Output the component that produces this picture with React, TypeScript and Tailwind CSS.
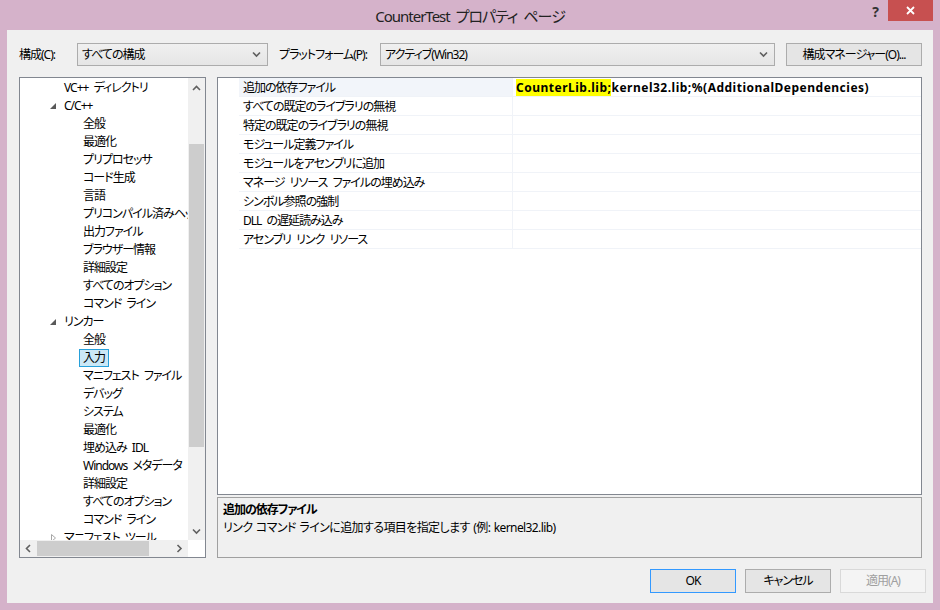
import React from 'react';

const FONT =
  "font-['Noto_Sans','Noto_Sans_CJK_JP',sans-serif] [font-feature-settings:'palt'] tracking-[-1px] [word-spacing:3px]";

type TreeItem = { label: string; level: 1 | 2; state?: 'open' | 'closed'; selected?: boolean };

const treeItems: TreeItem[] = [
  { label: 'VC++ ディレクトリ', level: 1 },
  { label: 'C/C++', level: 1, state: 'open' },
  { label: '全般', level: 2 },
  { label: '最適化', level: 2 },
  { label: 'プリプロセッサ', level: 2 },
  { label: 'コード生成', level: 2 },
  { label: '言語', level: 2 },
  { label: 'プリコンパイル済みヘッダー', level: 2 },
  { label: '出力ファイル', level: 2 },
  { label: 'ブラウザー情報', level: 2 },
  { label: '詳細設定', level: 2 },
  { label: 'すべてのオプション', level: 2 },
  { label: 'コマンド ライン', level: 2 },
  { label: 'リンカー', level: 1, state: 'open' },
  { label: '全般', level: 2 },
  { label: '入力', level: 2, selected: true },
  { label: 'マニフェスト ファイル', level: 2 },
  { label: 'デバッグ', level: 2 },
  { label: 'システム', level: 2 },
  { label: '最適化', level: 2 },
  { label: '埋め込み IDL', level: 2 },
  { label: 'Windows メタデータ', level: 2 },
  { label: '詳細設定', level: 2 },
  { label: 'すべてのオプション', level: 2 },
  { label: 'コマンド ライン', level: 2 },
  { label: 'マニフェスト ツール', level: 1, state: 'closed' },
];

const properties = [
  '追加の依存ファイル',
  'すべての既定のライブラリの無視',
  '特定の既定のライブラリの無視',
  'モジュール定義ファイル',
  'モジュールをアセンブリに追加',
  'マネージ リソース ファイルの埋め込み',
  'シンボル参照の強制',
  'DLL の遅延読み込み',
  'アセンブリ リンク リソース',
];

function Chevron({ dir }: { dir: 'up' | 'down' | 'left' | 'right' }) {
  const d = {
    up: 'M1 5 L4.5 1.5 L8 5',
    down: 'M1 1.5 L4.5 5 L8 1.5',
    left: 'M5 1 L1.5 4.5 L5 8',
    right: 'M1.5 1 L5 4.5 L1.5 8',
  }[dir];
  const vertical = dir === 'up' || dir === 'down';
  return (
    <svg width={vertical ? 9 : 7} height={vertical ? 7 : 9} viewBox={vertical ? '0 0 9 7' : '0 0 7 9'}>
      <path d={d} fill="none" stroke="#606060" strokeWidth="1.6" />
    </svg>
  );
}

function ComboBox({ value, width }: { value: string; width: string }) {
  return (
    <div
      className={`${width} flex h-[23px] items-center justify-between border border-[#acacac] bg-gradient-to-b from-[#f0f0f0] to-[#e5e5e5] pl-[4px] pr-[6px] text-[12px] text-black`}
    >
      <span>{value}</span>
      <Chevron dir="down" />
    </div>
  );
}

function TreeRow({ item }: { item: TreeItem }) {
  return (
    <div className="flex h-[18px] items-center whitespace-nowrap">
      {item.level === 1 ? (
        <>
          <span className="flex w-[44px] justify-end pr-[8px]">
            {item.state === 'open' && (
              <svg width="6" height="6" viewBox="0 0 6 6">
                <polygon points="6,0 6,6 0,6" fill="#595959" />
              </svg>
            )}
            {item.state === 'closed' && (
              <svg width="5" height="8" viewBox="0 0 5 8">
                <polygon points="0.5,0.5 4.5,4 0.5,7.5" fill="none" stroke="#a6a6a6" strokeWidth="1" />
              </svg>
            )}
          </span>
          <span>{item.label}</span>
        </>
      ) : (
        <span
          className={
            item.selected
              ? 'ml-[59px] flex h-[18px] items-center border border-[#26a0da] bg-[#cbe8f6] px-[3px]'
              : 'ml-[63px]'
          }
        >
          {item.label}
        </span>
      )}
    </div>
  );
}

function TreePanel() {
  return (
    <div className="flex h-[481px] w-[187px] flex-col border border-[#828790] bg-white text-[12px] text-black">
      <div className="flex min-h-0 flex-1">
        <div className="min-w-0 flex-1 overflow-hidden pt-[1px]">
          {treeItems.map((item, i) => (
            <TreeRow key={i} item={item} />
          ))}
        </div>
        {/* vertical scrollbar */}
        <div className="flex w-[17px] flex-col bg-[#f0f0f0]">
          <div className="flex h-[17px] items-center justify-center pt-[4px]">
            <Chevron dir="up" />
          </div>
          <div className="h-[49px]" />
          <div className="mx-[1px] h-[303px] bg-[#cdcdcd]" />
          <div className="flex-1" />
          <div className="flex h-[17px] items-center justify-center">
            <Chevron dir="down" />
          </div>
        </div>
      </div>
      {/* horizontal scrollbar */}
      <div className="flex h-[17px]">
        <div className="flex flex-1 items-center bg-[#f0f0f0]">
          <div className="flex w-[17px] justify-center">
            <Chevron dir="left" />
          </div>
          <div className="h-[15px] w-[112px] bg-[#cdcdcd]" />
          <div className="flex-1" />
          <div className="flex w-[17px] justify-center">
            <Chevron dir="right" />
          </div>
        </div>
        <div className="w-[17px] bg-white" />
      </div>
    </div>
  );
}

function PropertyGrid() {
  return (
    <div className="h-[418px] border border-[#828790] bg-white text-[12px] text-black">
      {properties.map((name, i) => (
        <div key={name} className="flex h-[19px]">
          <div className="w-[21px]" />
          <div
            className={`flex w-[274px] items-center border-b border-r border-[#f0f3f8] pl-[4px] pt-[2px] ${
              i === 0 ? 'bg-[#f2f5fa]' : ''
            }`}
          >
            {name}
          </div>
          <div className="flex flex-1 items-center border-b border-[#f0f3f8] pl-[3px] pt-[2px]">
            {i === 0 && (
              <span className="font-bold tracking-[0.5px] [word-spacing:0px]">
                <span className="bg-[#ffff00]">CounterLib.lib;</span>
                kernel32.lib;%(AdditionalDependencies)
              </span>
            )}
          </div>
        </div>
      ))}
    </div>
  );
}

function Button({ label, primary, disabled }: { label: string; primary?: boolean; disabled?: boolean }) {
  const tone = disabled
    ? 'border-[#d9d9d9] bg-[#f4f4f4] text-[#a0a0a0]'
    : primary
      ? 'border-[#3399ff] bg-[#e5e5e5] text-black'
      : 'border-[#acacac] bg-[#e5e5e5] text-black';
  return (
    <div className={`flex h-[24px] w-[86px] items-center justify-center border text-[12px] ${tone}`}>
      {label}
    </div>
  );
}

export default function App() {
  return (
    <div className={`flex h-[610px] w-[940px] flex-col overflow-hidden bg-[#d5b2ca] ${FONT}`}>
      {/* title bar */}
      <div className="relative flex h-[30px] items-center justify-center">
        <span className="pt-[2px] text-[15px] text-[#222]">CounterTest プロパティ ページ</span>
        <span className="absolute right-[62px] top-[1px] text-[14px] font-bold text-[#333]">?</span>
        <div className="absolute right-[7px] top-0 flex h-[21px] w-[45px] items-center justify-center bg-[#c75050]">
          <svg width="9" height="9" viewBox="0 0 9 9">
            <path d="M1 1 L8 8 M8 1 L1 8" stroke="white" strokeWidth="1.8" />
          </svg>
        </div>
      </div>

      {/* client area */}
      <div className="mx-[7px] mb-[7px] flex flex-1 flex-col bg-[#f0f0f0] pl-[12px] pr-[11px] pt-[13px]">
        <div className="flex h-[23px] items-center text-[12px] text-black">
          <span className="w-[58px]">構成(C):</span>
          <ComboBox value="すべての構成" width="w-[191px]" />
          <span className="ml-[11px] w-[101px]">プラットフォーム(P):</span>
          <ComboBox value="アクティブ(Win32)" width="w-[395px]" />
          <div className="ml-[11px] flex h-[23px] flex-1 items-center justify-center border border-[#acacac] bg-[#e5e5e5]">
            構成マネージャー(O)...
          </div>
        </div>

        <div className="mt-[11px] flex gap-[11px]">
          <TreePanel />
          <div className="flex flex-1 flex-col gap-[2px]">
            <PropertyGrid />
            <div className="h-[61px] border border-[#a0a0a0] bg-[#f0f0f0] px-[5px] pt-[3px] text-[12px] text-black">
              <div className="font-bold leading-[18px]">追加の依存ファイル</div>
              <div className="leading-[18px] tracking-[-0.6px] [word-spacing:1px]">
                リンク コマンド ラインに追加する項目を指定します (例: kernel32.lib)
              </div>
            </div>
          </div>
        </div>

        <div className="mr-[-4px] mt-[11px] flex justify-end gap-[9px]">
          <Button label="OK" primary />
          <Button label="キャンセル" />
          <Button label="適用(A)" disabled />
        </div>
      </div>
    </div>
  );
}
